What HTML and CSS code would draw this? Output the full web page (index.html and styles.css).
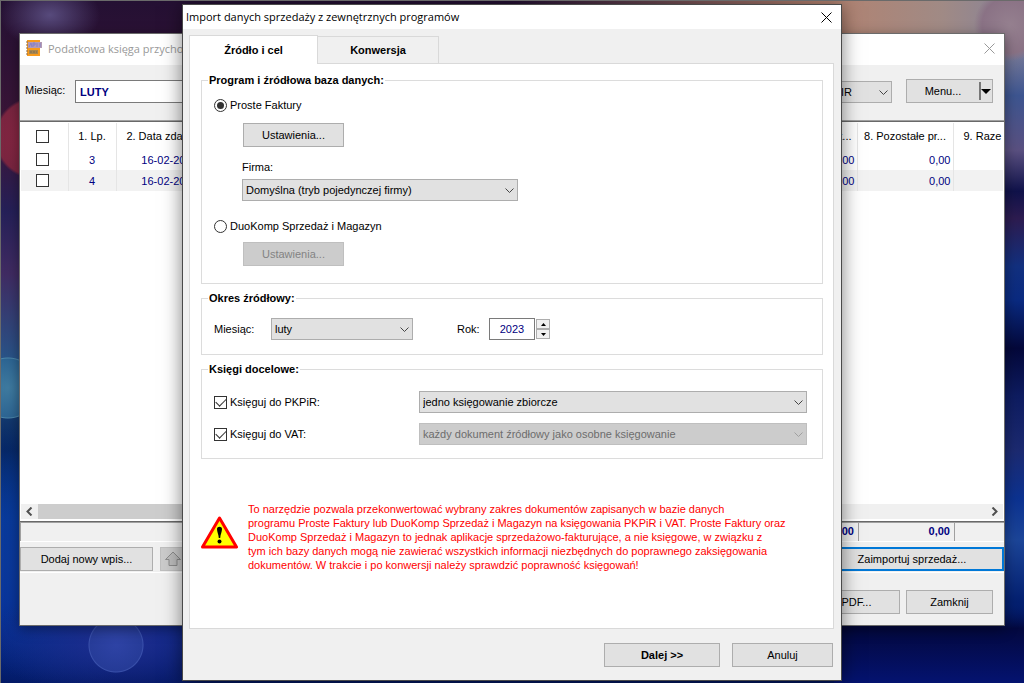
FILE: index.html
```html
<!DOCTYPE html>
<html lang="pl">

<head>
  <meta charset="UTF-8" />
  <title>Import danych sprzedaży z zewnętrznych programów</title>
  <meta name="viewport" content="width=device-width, initial-scale=1.0">
  <link rel="stylesheet" href="styles.css">
</head>

<body>

  <!-- Ledger window -->
  <section class="window ledger">
    <header class="titlebar">
      <svg class="app-icon" width="17" height="17" viewBox="0 0 17 17">
        <rect x="1" y="0" width="13" height="16" fill="#f79a1c" />
        <path d="M0 2h2M0 5h2M0 8h2M0 11h2M0 14h2" stroke="#8a6a4c" stroke-width="1" />
        <rect x="2" y="2" width="14" height="6" fill="#b39ab4" />
        <path d="M3 7l2-4 1 4M7 7V3h2v2H7M11 3v4M14 7V3" stroke="#8480c8" fill="none" />
        <rect x="3" y="10" width="9" height="4" fill="#a8864e" />
        <path d="M4 12h7" stroke="#7c6a50" stroke-dasharray="2 1" />
      </svg>
      <span class="title">Podatkowa księga przychodów</span>
      <button class="close" aria-label="Zamknij okno">
        <svg width="11" height="11" viewBox="0 0 11 11"><path d="M0.5 0.5l10 10M10.5 0.5l-10 10" /></svg>
      </button>
    </header>

    <div class="toolbar">
      <label for="month">Miesiąc:</label>
      <input id="month" class="month" type="text" value="LUTY">
      <div class="select kind">
        <select aria-label="Rodzaj"><option>PKPIR</option></select>
        <svg width="9" height="6" viewBox="0 0 9 6"><path d="M0.5 0.5l4 4 4-4" /></svg>
      </div>
      <button class="btn menu-btn"><span>Menu...</span>
        <svg width="13" height="18" viewBox="0 0 13 18"><path d="M1 0v18" stroke="#777" stroke-width="2" /><path d="M2 7h10l-5 5z" /></svg>
      </button>
    </div>

    <div class="grid">
      <table>
        <colgroup>
          <col class="c-check"><col class="c-no"><col class="c-date"><col><col class="c-sum"><col class="c-sum"><col class="c-last">
        </colgroup>
        <thead>
          <tr>
            <th><input type="checkbox" aria-label="Zaznacz wszystko"></th>
            <th>1. Lp.</th>
            <th>2. Data zdarzenia</th>
            <th></th>
            <th class="cut">7. Wart...</th>
            <th>8. Pozostałe pr...</th>
            <th class="last">9. Raze</th>
          </tr>
        </thead>
        <tbody>
          <tr>
            <td><input type="checkbox" aria-label="Zaznacz 3"></td>
            <td>3</td>
            <td>16-02-2023</td>
            <td></td>
            <td class="num">0,00</td>
            <td class="num">0,00</td>
            <td></td>
          </tr>
          <tr>
            <td><input type="checkbox" aria-label="Zaznacz 4"></td>
            <td>4</td>
            <td>16-02-2023</td>
            <td></td>
            <td class="num">0,00</td>
            <td class="num">0,00</td>
            <td></td>
          </tr>
        </tbody>
      </table>
      <div class="scrollbar">
        <button aria-label="W lewo"><svg width="7" height="9" viewBox="0 0 7 9"><path d="M5.5 0.5l-4 4 4 4" /></svg></button>
        <div class="thumb"></div>
        <button aria-label="W prawo"><svg width="7" height="9" viewBox="0 0 7 9"><path d="M1.5 0.5l4 4-4 4" /></svg></button>
      </div>
    </div>

    <div class="totals">
      <span></span>
      <span>0,00</span>
      <span>0,00</span>
      <span></span>
    </div>

    <div class="actions">
      <button class="btn add-btn">Dodaj nowy wpis...</button>
      <button class="btn up-btn" disabled aria-label="W górę">
        <svg width="18" height="16" viewBox="0 0 18 16"><path d="M9 1l7.5 7.5H13V14.5H5V8.5H1.5z" fill="#bdbdbd" stroke="#8c8c8c" /></svg>
      </button>
      <button class="btn import-btn">Zaimportuj sprzedaż...</button>
    </div>

    <footer class="bottom">
      <button class="btn">PDF...</button>
      <button class="btn">Zamknij</button>
    </footer>
  </section>

  <!-- Import dialog -->
  <section class="window dialog">
    <header class="titlebar">
      <span class="title">Import danych sprzedaży z zewnętrznych programów</span>
      <button class="close" aria-label="Zamknij">
        <svg width="11" height="11" viewBox="0 0 11 11"><path d="M0.5 0.5l10 10M10.5 0.5l-10 10" /></svg>
      </button>
    </header>

    <nav class="tabs">
      <button class="tab active">Źródło i cel</button>
      <button class="tab">Konwersja</button>
    </nav>

    <div class="panel">
      <fieldset class="source">
        <legend>Program i źródłowa baza danych:</legend>
        <label class="option"><input type="radio" name="program" checked>Proste Faktury</label>
        <div class="sub">
          <button class="btn settings">Ustawienia...</button>
          <label for="company">Firma:</label>
          <div class="select company">
            <select id="company"><option>Domyślna (tryb pojedynczej firmy)</option></select>
            <svg width="9" height="6" viewBox="0 0 9 6"><path d="M0.5 0.5l4 4 4-4" /></svg>
          </div>
        </div>
        <label class="option"><input type="radio" name="program">DuoKomp Sprzedaż i Magazyn</label>
        <div class="sub sub-tight">
          <button class="btn settings" disabled>Ustawienia...</button>
        </div>
      </fieldset>

      <fieldset class="period">
        <legend>Okres źródłowy:</legend>
        <div class="period-row">
          <label class="period-label" for="src-month">Miesiąc:</label>
          <div class="select src-month">
            <select id="src-month"><option>luty</option></select>
            <svg width="9" height="6" viewBox="0 0 9 6"><path d="M0.5 0.5l4 4 4-4" /></svg>
          </div>
          <label class="year-label" for="year">Rok:</label>
          <input id="year" class="year" type="text" value="2023">
          <div class="spinner">
            <button aria-label="Więcej"><svg width="5" height="3" viewBox="0 0 5 3"><path d="M0 3h5L2.5 0z" /></svg></button>
            <button aria-label="Mniej"><svg width="5" height="3" viewBox="0 0 5 3"><path d="M0 0h5L2.5 3z" /></svg></button>
          </div>
        </div>
      </fieldset>

      <fieldset class="target">
        <legend>Księgi docelowe:</legend>
        <div class="target-grid">
          <label class="option"><input type="checkbox" checked>Księguj do PKPiR:</label>
          <div class="select">
            <select aria-label="Księguj do PKPiR"><option>jedno księgowanie zbiorcze</option></select>
            <svg width="9" height="6" viewBox="0 0 9 6"><path d="M0.5 0.5l4 4 4-4" /></svg>
          </div>
          <label class="option"><input type="checkbox" checked>Księguj do VAT:</label>
          <div class="select">
            <select aria-label="Księguj do VAT" disabled><option>każdy dokument źródłowy jako osobne księgowanie</option></select>
            <svg width="9" height="6" viewBox="0 0 9 6"><path d="M0.5 0.5l4 4 4-4" /></svg>
          </div>
        </div>
      </fieldset>

      <div class="warning">
        <svg width="37" height="33" viewBox="0 0 37 33">
          <path d="M18.5 2L35.500 31H1.500z" fill="#ffff00" stroke="#ff0000" stroke-width="3" stroke-linejoin="round" />
          <path d="M16 13c0-3 5-3 5 0 0 3-1.5 5-1.8 9h-1.4C17.5 18 16 16 16 13z" />
          <circle cx="18.5" cy="25.5" r="2" />
        </svg>
        <p>To narzędzie pozwala przekonwertować wybrany zakres dokumentów zapisanych w bazie danych<br>
          programu Proste Faktury lub DuoKomp Sprzedaż i Magazyn na księgowania PKPiR i VAT. Proste Faktury oraz<br>
          DuoKomp Sprzedaż i Magazyn to jednak aplikacje sprzedażowo-fakturujące, a nie księgowe, w związku z<br>
          tym ich bazy danych mogą nie zawierać wszystkich informacji niezbędnych do poprawnego zaksięgowania<br>
          dokumentów. W trakcie i po konwersji należy sprawdzić poprawność księgowań!</p>
      </div>
    </div>

    <footer class="dialog-footer">
      <button class="btn next">Dalej &gt;&gt;</button>
      <button class="btn cancel">Anuluj</button>
    </footer>
  </section>

</body>

</html>
```

FILE: styles.css
```css
* {
  margin: 0;
  padding: 0;
  box-sizing: border-box;
}

body {
  height: 100vh;
  position: relative;
  overflow: hidden;
  font: 11px/14px "Liberation Sans", Arial, sans-serif;
  color: #000;
  border-top: 1px solid #6a6a6a;
  border-left: 1px solid #6a6a6a;
  background:
    radial-gradient(circle at 35px 138px, #8d2744 0, #7a2540 38px, transparent 41px),
    radial-gradient(circle at 8px 388px, #3f7ba0 0, #2d6593 29px, #4b85a8 30px, transparent 31px),
    radial-gradient(circle at 116px 645px, rgba(50, 72, 170, 0.8) 0, rgba(42, 64, 156, 0.8) 26px, rgba(66, 90, 180, 0.8) 27px, transparent 28px),
    radial-gradient(ellipse at 50px 15px, #574a7c 0, transparent 50px),
    radial-gradient(ellipse 130px 60px at 120px 640px, #202e90 0, transparent 100%),
    radial-gradient(ellipse 140px 140px at 40px 560px, #0b3a9c 0, transparent 100%),
    radial-gradient(circle at 1010px 25px, #95808f 0, #8a7285 28px, transparent 36px),
    linear-gradient(transparent 6%, #3d5590 14%, #5a5080 22%, #10124a 28%, #2d1c50 32%, #12307f 39%, #0a2a80 44%, #04083a 51%, #0e1c60 58%, #1c2a70 66%, #0c3290 73%, #1c4598 79%, #042070 88%, transparent 92%) right / 22px 100% no-repeat,
    linear-gradient(transparent 85%, #03083f 92%, #041370 100%) right / 190px 100% no-repeat,
    linear-gradient(90deg, transparent 50%, #b4826f 80%, #a08a85 92%, #85829a 100%) top / 100% 110px no-repeat,
    linear-gradient(#241033 0, #3d1638 20%, #252058 31%, #402b62 40%, #26588c 54%, #06245c 66%, #053a98 76%, #052c98 88%, #021660 100%);
}

button,
input,
select {
  font: inherit;
  color: inherit;
}

/* === Windows === */
.window {
  position: absolute;
  display: flex;
  flex-direction: column;
  background: #f0f0f0;
  border: 1px solid #6b6b6b;
}

.ledger {
  inset: 32px 19px 57px 18px;
  box-shadow: 0 3px 12px rgba(0, 0, 0, 0.4);
}

.dialog {
  inset: 3px 182px 2px 181px;
  border-color: #4a4a4a;
  box-shadow: 0 2px 18px rgba(0, 0, 0, 0.5);
}

.titlebar {
  display: flex;
  align-items: center;
  background: #fff;
  font-family: "Open Sans", "Noto Sans", sans-serif;
  flex: none;
}

.title {
  flex: 1;
  white-space: nowrap;
}

.close {
  display: flex;
  background: none;
  border: none;
}

.close svg {
  fill: none;
  stroke: #000;
}

.ledger .titlebar {
  height: 31px;
  padding: 0 9px 2px 6px;
  gap: 5px;
  color: #999;
}

.ledger .close svg {
  stroke: #999;
}

.dialog .titlebar {
  height: 24px;
  padding: 0 9px 0 3px;
}

/* === Common controls === */
.btn {
  height: 24px;
  background: #e1e1e1;
  border: 1px solid #adadad;
  text-align: center;
}

.btn:disabled {
  background: #ccc;
  border-color: #bfbfbf;
  color: #838383;
}

.select {
  display: grid;
  align-items: center;
}

.select select,
.select svg {
  grid-area: 1 / 1;
}

.select select {
  width: 100%;
  height: 22px;
  padding: 0 20px 0 3px;
  appearance: none;
  background: #e1e1e1;
  border: 1px solid #adadad;
  border-radius: 0;
}

.select svg {
  justify-self: end;
  margin-right: 4px;
  margin-top: 2px;
  fill: none;
  stroke: #444;
  pointer-events: none;
}

.select select:disabled {
  background: #ccc;
  border-color: #bfbfbf;
  color: #6d6d6d;
  opacity: 1;
}

.select select:disabled + svg {
  stroke: #a0a0a0;
}

input[type="checkbox"],
input[type="radio"] {
  appearance: none;
  width: 13px;
  height: 13px;
  flex: none;
  display: grid;
  place-items: center;
  background: #fff;
  border: 1px solid #333;
}

input[type="radio"] {
  border-radius: 50%;
}

input[type="radio"]:checked::before {
  content: "";
  width: 7px;
  height: 7px;
  border-radius: 50%;
  background: #333;
}

input[type="checkbox"]:checked::before {
  content: "";
  width: 9px;
  height: 5px;
  margin-bottom: 3px;
  border-left: 1px solid #333;
  border-bottom: 1px solid #333;
  transform: rotate(-45deg);
}

.option {
  display: flex;
  align-items: center;
  gap: 3px;
  height: 16px;
}

/* === Ledger window === */
.toolbar {
  display: flex;
  height: 56px;
  padding: 14px 11px 0 5px;
  border-bottom: 1px solid #a0a0a0;
}

.toolbar label {
  width: 50px;
  padding-top: 4px;
}

.month {
  width: 200px;
  height: 23px;
  margin-top: 1px;
  padding: 0 4px;
  border: 1px solid #7a7a7a;
  color: #000080;
  font-weight: bold;
}

.kind {
  width: 77px;
  height: 22px;
  margin: 2px 14px 0 auto;
}

.menu-btn {
  width: 87px;
  display: flex;
  align-items: center;
}

.menu-btn span {
  flex: 1;
}

.grid {
  flex: 1;
  display: flex;
  flex-direction: column;
  background: #fff;
  padding: 1px;
  border-top: 1px solid #696969;
  border-bottom: 1px solid #696969;
  overflow: hidden;
}

table {
  width: 100%;
  table-layout: fixed;
  border-collapse: collapse;
}

.c-check {
  width: 47px;
}

.c-no {
  width: 48px;
}

.c-date {
  width: 107px;
}

.c-sum {
  width: 96px;
}

.c-last {
  width: 50px;
}

th,
td {
  height: 21px;
  text-align: center;
  white-space: nowrap;
  overflow: hidden;
  border-right: 1px solid #e5e5e5;
}

th {
  height: 26px;
  font-weight: normal;
}

td {
  color: #000080;
}

th:first-child,
td:first-child {
  padding-right: 4px;
}

th:last-child,
td:last-child {
  border-right: none;
}

th input,
td input {
  margin: 0 auto;
}

tbody tr:nth-child(2) {
  background: #f2f2f2;
}

td.num {
  text-align: right;
  padding-right: 2px;
}

.cut {
  text-align: right;
  padding-right: 5px;
}

.last {
  text-align: left;
  padding-left: 10px;
}

.scrollbar {
  display: flex;
  height: 15px;
  margin-top: auto;
  margin-bottom: 1px;
  background: #f0f0f0;
}

.scrollbar button {
  width: 17px;
  display: grid;
  place-items: center;
  border: none;
  background: #f0f0f0;
}

.scrollbar svg {
  fill: none;
  stroke: #505050;
  stroke-width: 2;
}

.thumb {
  flex: 0 1 60%;
  background: #cdcdcd;
}

.scrollbar button:last-child {
  margin-left: auto;
}

.totals {
  display: grid;
  grid-template-columns: 1fr 96px 96px 50px;
  height: 20px;
  border-top: 1px solid #a0a0a0;
  border-bottom: 1px solid #fff;
  color: #000080;
  font-weight: bold;
  line-height: 17px;
  text-align: right;
}

.totals span {
  padding-right: 4px;
  border-left: 1px solid #a0a0a0;
}

.actions {
  display: flex;
  padding: 5px 0 1px;
  border-bottom: 1px solid #fff;
}

.add-btn {
  width: 133px;
}

.up-btn {
  width: 26px;
  margin-left: 7px;
  display: grid;
  place-items: center;
}

.import-btn {
  width: 184px;
  margin-left: auto;
  border: 2px solid #0078d7;
}

.bottom {
  display: flex;
  justify-content: flex-end;
  gap: 6px;
  padding: 17px 11px 11px;
}

.bottom .btn {
  width: 87px;
}

/* === Import dialog === */
.tabs {
  display: flex;
  align-items: flex-end;
  padding: 6px 6px 0;
}

.tab {
  width: 121px;
  height: 27px;
  background: #f0f0f0;
  border: 1px solid #d9d9d9;
  border-left: none;
  border-bottom: none;
  font-weight: bold;
}

.tab.active {
  width: 129px;
  height: 29px;
  margin-bottom: -1px;
  background: #fff;
  border-left: 1px solid #d9d9d9;
  z-index: 1;
}

.panel {
  flex: 1;
  margin: 0 7px 0 6px;
  padding: 9px 10px 0 11px;
  background: #fff;
  border: 1px solid #d9d9d9;
}

fieldset {
  margin-bottom: 7px;
  border: 1px solid #dcdcdc;
}

legend {
  margin-left: -6px;
  padding: 0 1px;
  height: 14px;
  font-weight: bold;
}

.source {
  padding: 10px 12px 17px;
}

.sub {
  display: flex;
  flex-direction: column;
  align-items: flex-start;
  padding: 10px 0 17px 28px;
}

.sub-tight {
  padding: 8px 0 0 28px;
}

.settings {
  width: 101px;
  margin-left: 1px;
}

.sub label {
  padding: 13px 0 5px;
}

.company {
  width: 276px;
}

.period {
  padding: 13px 12px 14px;
}

.period-row {
  display: flex;
  align-items: center;
}

.period-label {
  width: 57px;
}

.src-month {
  width: 142px;
  margin-right: 44px;
}

.year-label {
  width: 32px;
}

.year {
  width: 46px;
  height: 22px;
  border: 1px solid #7a7a7a;
  color: #000080;
  text-align: center;
}

.spinner {
  display: grid;
  width: 14px;
  height: 20px;
  margin-left: 1px;
}

.spinner button {
  display: grid;
  place-items: center;
  background: #f0f0f0;
  border: 1px solid #adadad;
}

.target {
  padding: 15px 15px 13px 12px;
  margin-bottom: 43px;
}

.target-grid {
  display: grid;
  grid-template-columns: 205px 1fr;
  align-items: center;
  row-gap: 10px;
}

.warning {
  display: flex;
  align-items: flex-start;
  gap: 10px;
  color: #f00;
}

.warning svg {
  flex: none;
  margin-top: 14px;
}

.warning p {
  white-space: nowrap;
}

.dialog-footer {
  display: flex;
  justify-content: flex-end;
  gap: 12px;
  padding: 14px 8px 13px;
}

.next {
  width: 116px;
  font-weight: bold;
}

.cancel {
  width: 101px;
}
```
